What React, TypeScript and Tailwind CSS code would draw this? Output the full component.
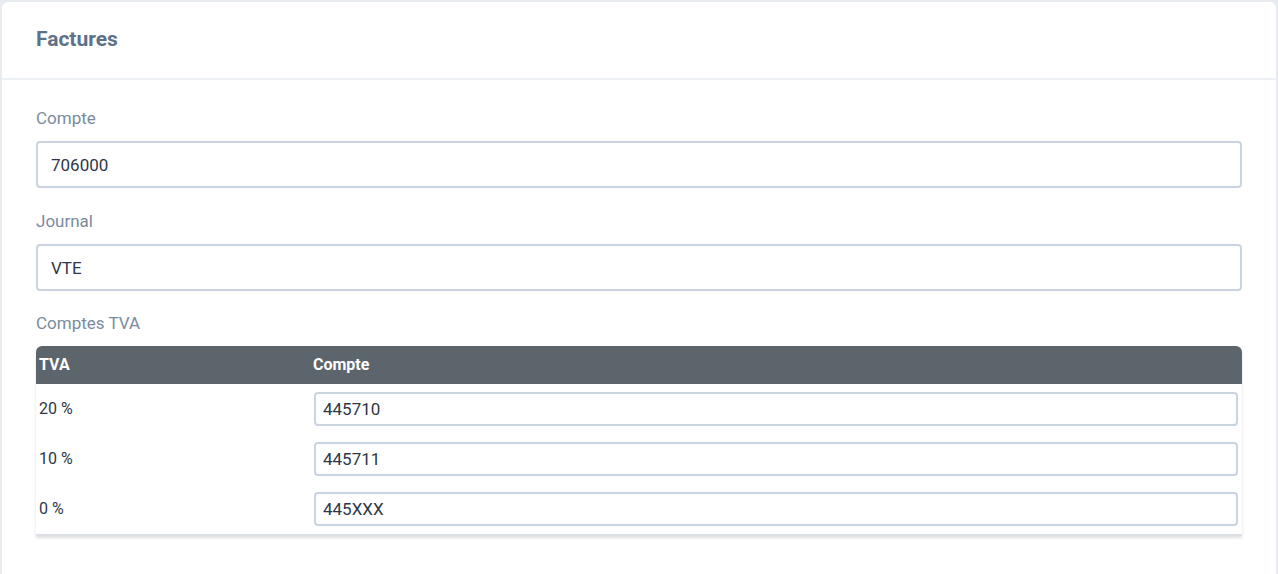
import React from 'react';

const rows = [
  { tva: '20 %', compte: '445710' },
  { tva: '10 %', compte: '445711' },
  { tva: '0 %', compte: '445XXX' },
];

const App: React.FC = () => {
  return (
    <div className="min-h-screen bg-[#e8ecf1] pt-[2px] px-[2px] font-['Roboto',sans-serif]">
      <div className="bg-white rounded-md h-[620px]">
        {/* Header */}
        <div className="h-[78px] flex items-center px-[34px] border-b-2 border-[#eceff4]">
          <h2 className="text-[21px] font-bold text-[#5e7189]">Factures</h2>
        </div>

        <div className="px-[34px] pt-[28px]">
          <label className="block text-[17px] text-[#7a8ba1] leading-5 mb-[13px]">Compte</label>
          <input
            defaultValue="706000"
            className="w-full h-[47px] border-2 border-[#c9d4e0] rounded-[4px] px-[13px] text-[17px] text-[#2d3748] focus:outline-none"
          />

          <label className="block text-[17px] text-[#7a8ba1] leading-5 mt-[23px] mb-[13px]">Journal</label>
          <input
            defaultValue="VTE"
            className="w-full h-[47px] border-2 border-[#c9d4e0] rounded-[4px] px-[13px] text-[17px] text-[#2d3748] focus:outline-none"
          />

          <label className="block text-[17px] text-[#7a8ba1] leading-5 mt-[22px] mb-[13px]">Comptes TVA</label>

          {/* Table */}
          <div className="rounded-t-md shadow-[0_2px_3px_rgba(0,0,0,0.12)] border-b-2 border-[#dcdfe3]">
            <div className="h-[38px] bg-[#5c646c] rounded-t-md flex items-center text-white text-[16px] font-bold">
              <div className="w-[277px] pl-[3px]">TVA</div>
              <div>Compte</div>
            </div>
            {rows.map((r) => (
              <div key={r.tva} className="h-[50px] flex items-start pt-[8px]">
                <div className="w-[277px] pl-[3px] pt-[7px] text-[16px] leading-5 text-[#2d3748]">{r.tva}</div>
                <input
                  defaultValue={r.compte}
                  className="flex-1 mr-[4px] ml-px h-[34px] border-2 border-[#c9d4e0] rounded-[4px] px-[7px] text-[17px] text-[#2d3748] focus:outline-none"
                />
              </div>
            ))}
          </div>
        </div>
      </div>
    </div>
  );
};

export default App;
